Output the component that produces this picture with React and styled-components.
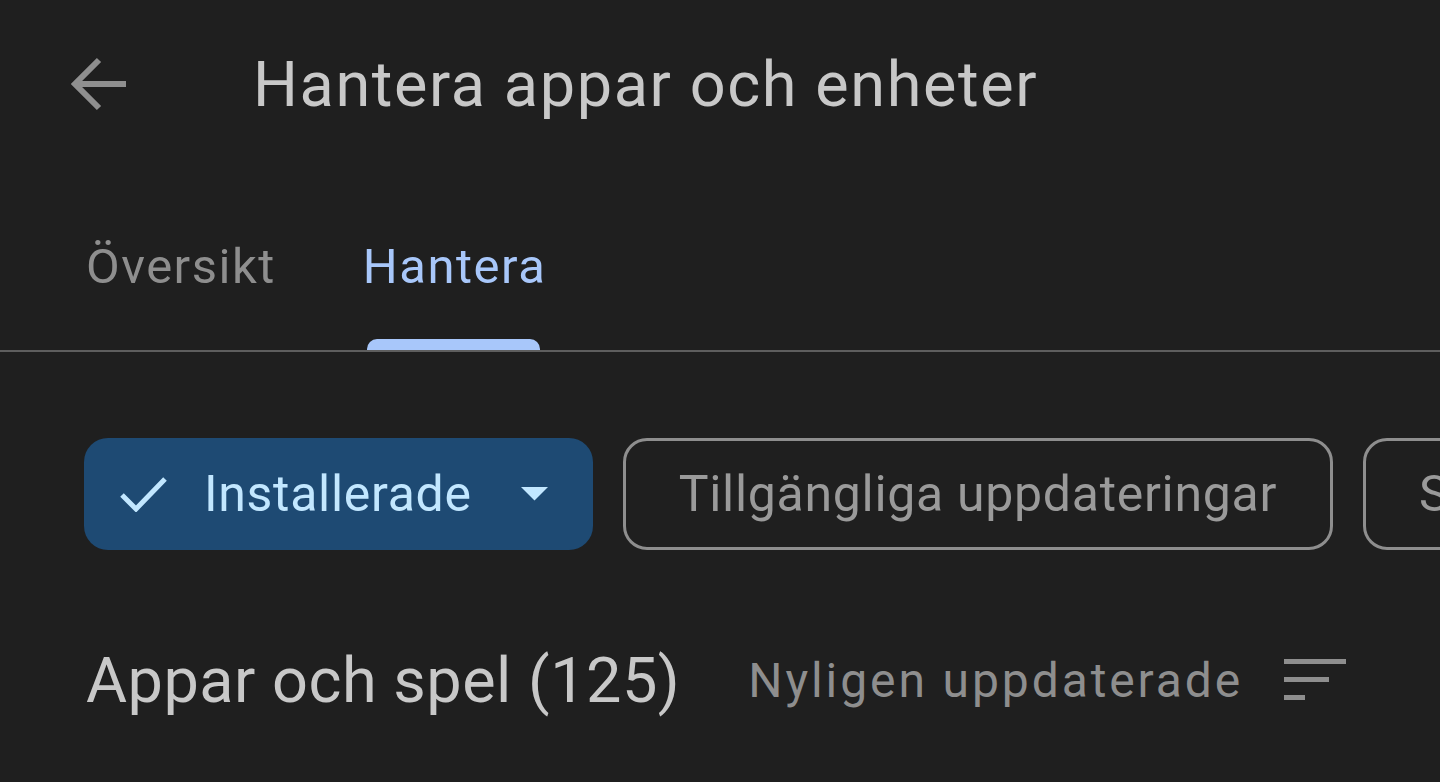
import React from 'react';
import styled, { createGlobalStyle } from 'styled-components';

const GlobalStyle = createGlobalStyle`
  html, body {
    margin: 0;
    padding: 0;
    background: #1f1f1f;
  }
  body {
    font-family: Roboto, "Noto Sans", sans-serif;
    overflow: hidden;
  }
`;

const Page = styled.div`
  width: 1440px;
  height: 782px;
  background: #1f1f1f;
  overflow: hidden;
`;

const Header = styled.header`
  height: 168px;
  display: flex;
  align-items: center;
  padding-left: 70px;
`;

const BackButton = styled.button`
  width: 56px;
  height: 56px;
  padding: 0;
  border: none;
  background: none;
  display: flex;
  align-items: center;
  justify-content: center;
  color: #8f8f8f;
`;

const Title = styled.h1`
  margin: 0 0 0 127px;
  font-size: 63px;
  font-weight: 400;
  color: #c8c8c8;
  letter-spacing: 1.6px;
`;

const TabBar = styled.nav`
  display: flex;
  gap: 87px;
  padding-left: 86px;
  border-bottom: 2px solid #5e5e5e;
`;

const Tab = styled.div`
  position: relative;
  height: 182px;
  padding-top: 14px;
  box-sizing: border-box;
  display: flex;
  align-items: center;
  font-size: 49px;
  letter-spacing: 1.5px;
  color: ${({ active }) => (active ? '#a8c7fa' : '#8e8e8e')};
`;

const Indicator = styled.span`
  position: absolute;
  left: 4px;
  right: 6px;
  bottom: 0;
  height: 11px;
  border-radius: 10px 10px 0 0;
  background: #a8c7fa;
`;

const ChipRow = styled.div`
  display: flex;
  gap: 30px;
  margin-top: 86px;
  padding-left: 84px;
  white-space: nowrap;
`;

const Chip = styled.div`
  flex: none;
  height: 112px;
  box-sizing: border-box;
  border-radius: 24px;
  display: flex;
  align-items: center;
  font-size: 50px;
  letter-spacing: 0.7px;
  ${({ selected }) =>
    selected
      ? `
    background: #1e4a73;
    color: #c2e7ff;
    padding: 0 45px 0 36px;
  `
      : `
    border: 3px solid #8e8e8e;
    color: #9a9a9a;
    padding: 0 53px;
  `}
`;

const ChipLabel = styled.span`
  margin: 0 49px 0 37px;
`;

const SectionRow = styled.div`
  display: flex;
  align-items: center;
  height: 100px;
  margin-top: 80px;
  padding-left: 86px;
`;

const SectionTitle = styled.h2`
  margin: 0;
  font-size: 63px;
  font-weight: 400;
  letter-spacing: 0.5px;
  color: #c8c8c8;
`;

const SortLabel = styled.span`
  margin-left: 68px;
  font-size: 48px;
  letter-spacing: 2.9px;
  color: #8e8e8e;
`;

const SortIcon = styled.svg`
  margin-left: 41px;
  color: #8e8e8e;
`;

const App = () => (
  <Page>
    <GlobalStyle />
    <Header>
      <BackButton aria-label="Tillbaka">
        <svg width="56" height="56" viewBox="0 0 56 56" fill="none" stroke="currentColor" strokeWidth="6">
          <path d="M56 28H5M29 4L5 28l24 24" />
        </svg>
      </BackButton>
      <Title>Hantera appar och enheter</Title>
    </Header>

    <TabBar>
      <Tab>Översikt</Tab>
      <Tab active>
        Hantera
        <Indicator />
      </Tab>
    </TabBar>

    <ChipRow>
      <Chip selected>
        <svg width="47" height="36" viewBox="0 0 47 36" fill="none" stroke="currentColor" strokeWidth="5">
          <path d="M2 19l14 14L45 3" />
        </svg>
        <ChipLabel>Installerade</ChipLabel>
        <svg width="27" height="14" viewBox="0 0 27 14" fill="currentColor">
          <path d="M0 0h27L13.5 13.5z" />
        </svg>
      </Chip>
      <Chip>Tillgängliga uppdateringar</Chip>
      <Chip>Spel</Chip>
    </ChipRow>

    <SectionRow>
      <SectionTitle>Appar och spel (125)</SectionTitle>
      <SortLabel>Nyligen uppdaterade</SortLabel>
      <SortIcon width="62" height="42" viewBox="0 0 62 42" fill="currentColor">
        <rect x="0" y="0" width="62" height="5" />
        <rect x="0" y="18" width="45" height="5" />
        <rect x="0" y="36" width="21" height="5" />
      </SortIcon>
    </SectionRow>
  </Page>
);

export default App;
